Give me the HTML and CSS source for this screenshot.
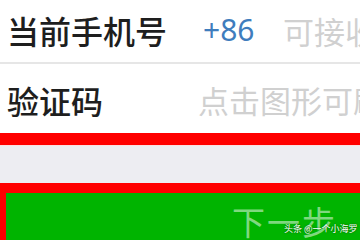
FILE: index.html
```html
<html>
<head>
  <meta charset="utf-8">
  <link rel="stylesheet" href="styles.css">
</head>
<body>
<div class="form">
  <div class="row row-phone">
    <span class="label">当前手机号</span>
    <span class="code">+86</span>
    <span class="hint">可接收短信的手机号</span>
  </div>
  <div class="row row-captcha">
    <span class="label">验证码</span>
    <span class="hint">点击图形可刷新</span>
  </div>
</div>
<div class="mark-line"></div>
<div class="gap"></div>
<div class="frame">
  <div class="next">
    <span class="next-text">下一步</span>
    <span class="watermark">头条 @一个小海罗</span>
  </div>
</div>
</body>
</html>
```

FILE: styles.css
```css
body {
    margin: 0;
    width: 360px;
    height: 240px;
    overflow: hidden;
    background: #ffffff;
    font-family: "Noto Sans CJK SC", "Noto Sans", sans-serif;
}

.row {
    display: flex;
    align-items: center;
    padding-left: 7px;
    white-space: nowrap;
    overflow: hidden;
}

.row > span {
    flex-shrink: 0;
}

.row-phone {
    height: 64px;
    border-bottom: 2px solid #e6e6e6;
    padding-bottom: 2px;
    box-sizing: border-box;
}

.row-captcha {
    height: 67px;
    padding-top: 4px;
    box-sizing: border-box;
}

.label {
    font-size: 32px;
    font-weight: 500;
    color: #1e1e1e;
    line-height: 1;
}

.row-phone .label {
    width: 196px;
}

.row-captcha .label {
    width: 191px;
}

.code {
    font-family: "Noto Sans", sans-serif;
    font-size: 30px;
    color: #3f7dbd;
    width: 80px;
    line-height: 1;
}

.hint {
    font-size: 31px;
    color: #d0d0d0;
    line-height: 1;
}

.mark-line {
    height: 12px;
    margin-top: 2px;
    background: #ff0000;
}

.gap {
    height: 37px;
    background: #ededf2;
    border-top: 1px solid #fbe0e0;
}

.frame {
    background: #ff0000;
    padding: 10px 0 0 6px;
    height: 47px;
}

.next {
    position: relative;
    height: 47px;
    background: #00b400;
    overflow: hidden;
    padding-left: 226px;
}

.next-text {
    display: block;
    font-size: 33px;
    line-height: 1;
    padding-top: 12px;
    color: #7fd87f;
    letter-spacing: 2px;
}

.watermark {
    position: absolute;
    left: 278px;
    top: 29px;
    font-size: 9px;
    color: #ffffff;
    text-shadow: 0 0 2px rgba(0, 0, 0, 0.6);
    white-space: nowrap;
}
```
